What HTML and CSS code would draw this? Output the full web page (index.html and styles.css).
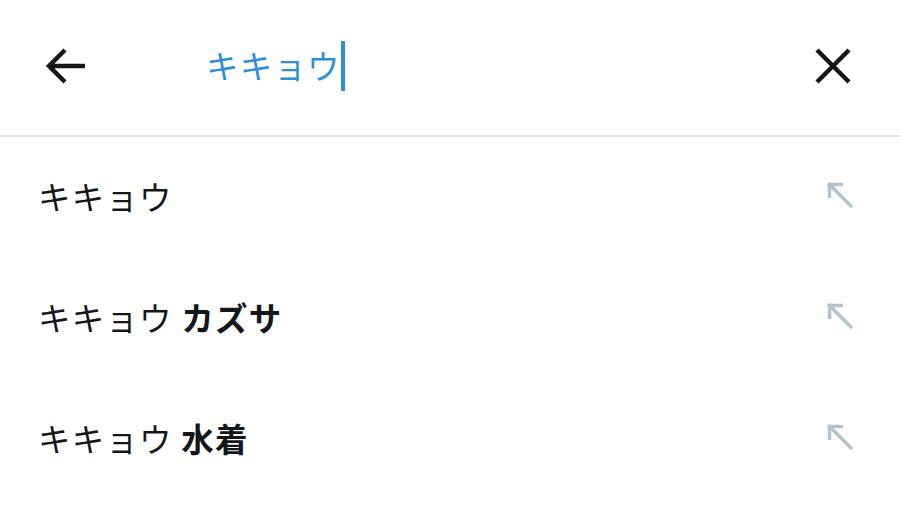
FILE: index.html
```html
<!DOCTYPE html>
<html lang="ja">
<head>
<meta charset="utf-8">
<link rel="stylesheet" href="styles.css">
</head>
<body>
<div class="app">
  <header class="header">
    <button class="icon-btn back">
      <svg width="44" height="44" viewBox="0 0 44 44"><path d="M41 22H6M21 6L5 22l16 16" fill="none" stroke="#14171a" stroke-width="4.5"/></svg>
    </button>
    <div class="query"><span class="qtext">キキョウ</span><span class="caret"></span></div>
    <button class="icon-btn close">
      <svg width="40" height="40" viewBox="0 0 40 40"><path d="M4 4L36 36M36 4L4 36" fill="none" stroke="#14171a" stroke-width="4.5"/></svg>
    </button>
  </header>
  <ul class="list">
    <li class="row"><span class="label">キキョウ</span><svg width="30" height="30" viewBox="0 0 30 30"><path d="M4 4L27 27M2.5 4.5H18M4.5 2.5V18" fill="none" stroke="#b6c3ca" stroke-width="3.5"/></svg></li>
    <li class="row"><span class="label">キキョウ <b>カズサ</b></span><svg width="30" height="30" viewBox="0 0 30 30"><path d="M4 4L27 27M2.5 4.5H18M4.5 2.5V18" fill="none" stroke="#b6c3ca" stroke-width="3.5"/></svg></li>
    <li class="row"><span class="label">キキョウ <b>水着</b></span><svg width="30" height="30" viewBox="0 0 30 30"><path d="M4 4L27 27M2.5 4.5H18M4.5 2.5V18" fill="none" stroke="#b6c3ca" stroke-width="3.5"/></svg></li>
  </ul>
</div>
</body>
</html>
```
FILE: styles.css
```css
* { box-sizing: border-box; }
html, body { margin: 0; padding: 0; background: #fff; }
body { font-family: "Noto Sans CJK JP", "Noto Sans", sans-serif; color: #14171a; }
.app { width: 900px; height: 505px; overflow: hidden; }
.header {
  height: 137px;
  display: flex;
  align-items: center;
  border-bottom: 2px solid #e3e3e3;
  padding: 0 47px 0 44px;
}
.icon-btn {
  background: none; border: 0; padding: 0; margin: 0;
  display: flex; align-items: center; justify-content: center;
}
.back { width: 44px; height: 44px; margin-top: -3px; }
.query {
  flex: 1;
  display: flex;
  align-items: center;
  margin-left: 118px;
  margin-top: -4px;
}
.qtext { font-size: 32.5px; color: #2b90d9; line-height: 1; letter-spacing: 1.2px; }
.caret { display: inline-block; width: 4px; height: 50px; background: #2b90d9; margin-left: 0; }
.close { width: 40px; height: 40px; margin-top: -3px; }
.list { list-style: none; margin: 0; padding: 0; }
.row {
  height: 121px;
  display: flex;
  align-items: center;
  justify-content: space-between;
  padding: 0 45px 0 38px;
}
.label { font-size: 32.5px; letter-spacing: 1.2px; margin-top: -5px; }
.label b { font-weight: 700; }
.row svg { margin-top: -5px; }
```
